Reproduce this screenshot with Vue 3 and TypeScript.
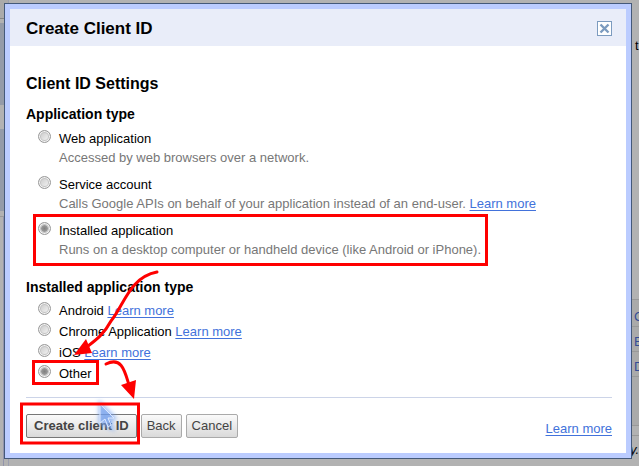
<script setup lang="ts">
import { ref } from 'vue'

interface AppType {
  id: string
  label: string
  text: string
  link?: boolean
}

const appTypes: AppType[] = [
  { id: 'web', label: 'Web application', text: 'Accessed by web browsers over a network.' },
  {
    id: 'service',
    label: 'Service account',
    text: 'Calls Google APIs on behalf of your application instead of an end-user.',
    link: true,
  },
  {
    id: 'installed',
    label: 'Installed application',
    text: 'Runs on a desktop computer or handheld device (like Android or iPhone).',
  },
]

const platforms = [
  { id: 'android', label: 'Android', link: true },
  { id: 'chrome', label: 'Chrome Application', link: true },
  { id: 'ios', label: 'iOS', link: true },
  { id: 'other', label: 'Other', link: false },
]

const appType = ref('installed')
const platform = ref('other')
</script>

<template>
  <div class="page">
    <div class="behind" aria-hidden="true">
      <div class="nav">
        <div class="tab"></div>
        <div class="block tall"></div>
        <div class="gap"></div>
        <div class="block"></div>
        <div class="rest"></div>
      </div>
      <div class="side">
        <p class="lead">t</p>
        <ul class="rows">
          <li>C</li>
          <li>E</li>
          <li>D</li>
        </ul>
        <p class="tail">y.</p>
      </div>
    </div>

    <form class="dialog" role="dialog" aria-labelledby="dialog-title" @submit.prevent>
      <header class="head">
        <h1 id="dialog-title">Create Client ID</h1>
        <button type="button" class="close" aria-label="Close">
          <svg width="15" height="15" viewBox="0 0 15 15">
            <rect x="0.5" y="0.5" width="14" height="14" fill="#fff" stroke="#7c9bbf" />
            <path d="M3.500 3.500L11.500 11.500M11.500 3.500L3.500 11.500" stroke="#7c9bbf" stroke-width="2.400" />
          </svg>
        </button>
      </header>

      <div class="body">
        <h2>Client ID Settings</h2>

        <h3 id="type-title">Application type</h3>
        <div class="types" role="radiogroup" aria-labelledby="type-title">
          <div v-for="t in appTypes" :key="t.id" class="option">
            <input :id="t.id" v-model="appType" type="radio" name="type" :value="t.id" />
            <div>
              <label :for="t.id">{{ t.label }}</label>
              <p>{{ t.text }} <a v-if="t.link" href="#">Learn more</a></p>
            </div>
          </div>
        </div>

        <h3 id="platform-title">Installed application type</h3>
        <div class="platforms" role="radiogroup" aria-labelledby="platform-title">
          <div v-for="p in platforms" :key="p.id" class="option">
            <input :id="p.id" v-model="platform" type="radio" name="platform" :value="p.id" />
            <div>
              <label :for="p.id">{{ p.label }}</label>
              <template v-if="p.link">{{ ' ' }}<a href="#">Learn more</a></template>
            </div>
          </div>
        </div>

        <footer class="foot">
          <button type="submit" class="btn primary">Create client ID</button>
          <button type="button" class="btn">Back</button>
          <button type="button" class="btn">Cancel</button>
          <a class="more" href="#">Learn more</a>
        </footer>
      </div>
    </form>

    <svg class="marks" width="500" height="460" viewBox="0 0 500 460" aria-hidden="true">
      <defs>
        <filter id="glow" x="-50%" y="-50%" width="200%" height="200%">
          <feGaussianBlur stdDeviation="2" />
        </filter>
      </defs>
      <path d="M100 403L115 418L110 421L113 429L106 426L100 423Z" fill="#6f9ff0" stroke="#7fa9f2" stroke-width="3" opacity="0.7" filter="url(#glow)" />
      <path d="M100 404V423L105 419L108 427L111 425L108 418L114 418Z" fill="#6d99e6" fill-opacity="0.35" stroke="#dce8ff" stroke-width="1" />
      <g fill="none" stroke="#fe0000" stroke-width="3">
        <rect x="34.500" y="215.500" width="452" height="49" />
        <rect x="33.500" y="361.500" width="64" height="22" />
        <rect x="21.500" y="404" width="117" height="39" />
        <path d="M157 272C130 277 124 305 111 321C104 334 96 340 88 346" stroke-linecap="round" />
        <path d="M106 364C122 356 125 372 129 385" stroke-linecap="round" />
      </g>
      <path d="M74 355L86 339L92 353ZM134 399L121 385L136 380Z" fill="#fe0000" />
    </svg>
  </div>
</template>

<style>
body {
  margin: 0;
  background: #b2b2b2;
}
</style>

<style scoped>
* {
  box-sizing: border-box;
}
.page {
  position: relative;
  display: flow-root;
  min-height: 100vh;
  overflow: hidden;
  font: 13px/19px "Liberation Sans", Arial, sans-serif;
  color: #000;
}
h1,
h2,
h3,
p,
ul {
  margin: 0;
  padding: 0;
}
.behind {
  position: absolute;
  inset: 0;
  display: flex;
  justify-content: space-between;
}
.nav {
  display: flex;
  flex-direction: column;
  width: 9px;
  border-right: 1px solid #9b9fb0;
}
.tab {
  height: 19px;
  background: #aaa;
  border-bottom: 1px solid #858585;
}
.block {
  height: 82px;
  margin-top: 4px;
  background: #949ba8;
}
.gap {
  height: 20px;
}
.rest {
  flex: 1;
  margin-top: 5px;
  width: 4px;
  border-top: 1px solid #999;
  border-right: 1px solid #9294ab;
}
.side {
  display: flex;
  flex-direction: column;
  width: 9px;
  padding-top: 36px;
}
.lead {
  padding-left: 5px;
  height: 263px;
}
.rows {
  list-style: none;
  height: 127px;
  color: #354d96;
  background: #aaa;
  border-top: 1px solid #999;
  border-bottom: 1px solid #999;
}
.rows li {
  height: 25px;
  padding: 5px 0 0 4px;
  border-bottom: 1px solid #999;
}
.rows li:first-child {
  height: 27px;
  padding-top: 7px;
}
.tail {
  flex: 1;
  margin-top: 9px;
  padding-top: 4px;
  border-top: 1px solid #999;
  font-style: italic;
}
.dialog {
  position: relative;
  margin: 3px 7px 7px 4px;
  border: 1px solid #44597a;
  background: #fff;
  box-shadow: inset 0 0 0 5px #bbccff;
  padding: 5px;
}
.head {
  display: flex;
  align-items: center;
  justify-content: space-between;
  height: 37px;
  padding: 0 14px 0 16px;
  background: #e9edf9;
}
h1 {
  font-size: 17px;
  line-height: 20px;
  padding-top: 2px;
}
.close {
  display: flex;
  padding: 2px 0 0;
  border: 0;
  background: none;
}
.body {
  padding: 28px 14px 15px 16px;
}
h2 {
  font-size: 16px;
  line-height: 20px;
}
h3 {
  margin-top: 10px;
  font-size: 14px;
  line-height: 20px;
}
.types {
  display: grid;
  gap: 8px;
  margin-top: 5px;
}
.option {
  display: flex;
  gap: 8px;
  padding-left: 12px;
}
.option p {
  color: #777;
}
input {
  flex: none;
  appearance: none;
  width: 13px;
  height: 13px;
  margin: 1px 0 0;
  border: 1px solid #999;
  border-radius: 50%;
  background: linear-gradient(135deg, #c4c4c4, #fafafa);
  box-shadow: inset 0 0 0 1px #f4f4f4, inset 0 0 0 2px #c4c4c4;
}
input:checked {
  background: radial-gradient(circle at 50% 50%, #808080 0, #999 3px, #ddd 4px);
}
.types + h3 {
  margin-top: 18px;
}
.platforms {
  display: grid;
  gap: 2px;
  margin-top: 4px;
}
a {
  color: #4272db;
  text-decoration: underline;
  text-underline-offset: 2px;
}
.foot {
  display: flex;
  align-items: center;
  gap: 4px;
  margin-top: 14px;
  padding-top: 16px;
  border-top: 1px solid #ccd4e8;
}
.btn {
  height: 24px;
  padding: 0 5px;
  border: 1px solid #aaa;
  border-radius: 2px;
  background: linear-gradient(#fafafa, #dadada);
  color: #444;
  font: inherit;
}
.primary {
  padding: 0 7px;
  border-color: #777;
  font-weight: bold;
}
.foot {
  padding-top: 15px;
}
.more {
  margin-left: auto;
  padding-top: 6px;
}
.marks {
  position: absolute;
  left: 0;
  top: 0;
  pointer-events: none;
}
</style>
